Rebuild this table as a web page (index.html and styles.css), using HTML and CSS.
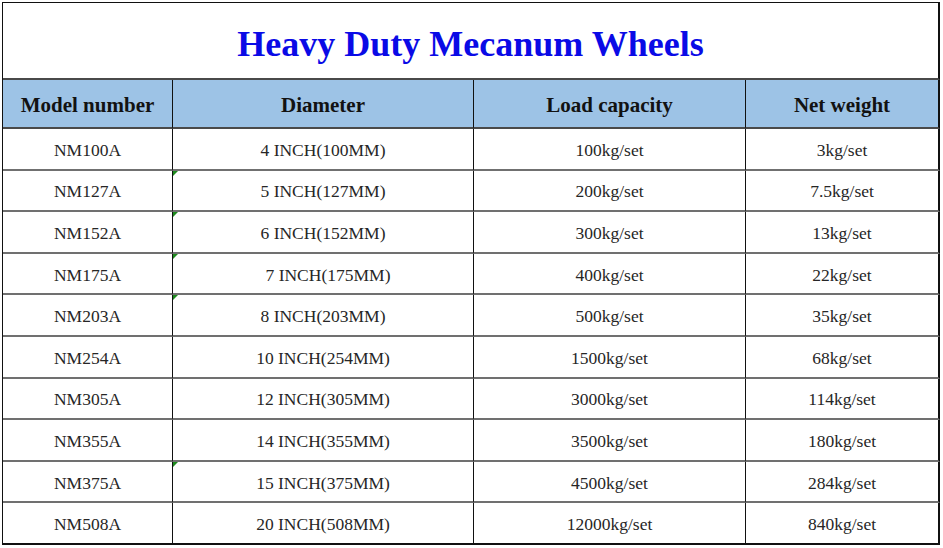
FILE: index.html
```html
<!DOCTYPE html>
<html>
<head>
<meta charset="utf-8">
<link rel="stylesheet" href="styles.css">
</head>
<body>
<div class="sheet">
  <div class="title">Heavy Duty Mecanum Wheels</div>
  <div class="cell head">Model number</div>
  <div class="cell head">Diameter</div>
  <div class="cell head">Load capacity</div>
  <div class="cell head last">Net weight</div>

  <div class="cell">NM100A</div><div class="cell">4 INCH(100MM)</div><div class="cell">100kg/set</div><div class="cell last">3kg/set</div>
  <div class="cell">NM127A</div><div class="cell mark">5 INCH(127MM)</div><div class="cell">200kg/set</div><div class="cell last">7.5kg/set</div>
  <div class="cell">NM152A</div><div class="cell mark">6 INCH(152MM)</div><div class="cell">300kg/set</div><div class="cell last">13kg/set</div>
  <div class="cell">NM175A</div><div class="cell mark shift">7 INCH(175MM)</div><div class="cell">400kg/set</div><div class="cell last">22kg/set</div>
  <div class="cell">NM203A</div><div class="cell mark">8 INCH(203MM)</div><div class="cell">500kg/set</div><div class="cell last">35kg/set</div>
  <div class="cell">NM254A</div><div class="cell">10 INCH(254MM)</div><div class="cell">1500kg/set</div><div class="cell last">68kg/set</div>
  <div class="cell">NM305A</div><div class="cell">12 INCH(305MM)</div><div class="cell">3000kg/set</div><div class="cell last">114kg/set</div>
  <div class="cell">NM355A</div><div class="cell">14 INCH(355MM)</div><div class="cell">3500kg/set</div><div class="cell last">180kg/set</div>
  <div class="cell">NM375A</div><div class="cell mark">15 INCH(375MM)</div><div class="cell">4500kg/set</div><div class="cell last">284kg/set</div>
  <div class="cell">NM508A</div><div class="cell">20 INCH(508MM)</div><div class="cell">12000kg/set</div><div class="cell last">840kg/set</div>
</div>
</body>
</html>
```

FILE: styles.css
```css
html, body {
  margin: 0;
  padding: 0;
  background: #ffffff;
}

body {
  padding: 2px 0 0 2px;
  font-family: "Liberation Serif", "Times New Roman", serif;
}

.sheet {
  display: grid;
  grid-template-columns: 170px 301px 272px 194px;
  grid-template-rows: 77px 49px repeat(10, 41.6px);
  width: max-content;
  border-left: 1px solid #111;
  border-top: 1px solid #111;
  box-sizing: border-box;
}

.title {
  grid-column: 1 / 5;
  display: flex;
  align-items: center;
  justify-content: center;
  padding-top: 6px;
  box-sizing: border-box;
  border-right: 2px solid #111;
  border-bottom: 2px solid #4a4a4a;
  color: #0a0ae6;
  font-weight: bold;
  font-size: 36px;
}

.cell {
  position: relative;
  display: flex;
  align-items: center;
  justify-content: center;
  box-sizing: border-box;
  border-right: 1px solid #111;
  border-bottom: 2px solid #707070;
  color: #262626;
  font-size: 17.5px;
  padding-top: 3px;
}

.cell.last {
  border-right: 2px solid #111;
}

.head {
  background: #9dc3e6;
  color: #121212;
  font-weight: bold;
  font-size: 21px;
  border-bottom: 2px solid #4a4a4a;
  padding-top: 3px;
}

.shift {
  padding-left: 10px;
}

.mark::before {
  content: "";
  position: absolute;
  left: 0;
  top: 0;
  width: 0;
  height: 0;
  border-top: 5px solid #1f8a1f;
  border-right: 5px solid transparent;
}

.sheet > .cell:nth-last-child(-n+4) {
  border-bottom: 2px solid #111;
}
```
